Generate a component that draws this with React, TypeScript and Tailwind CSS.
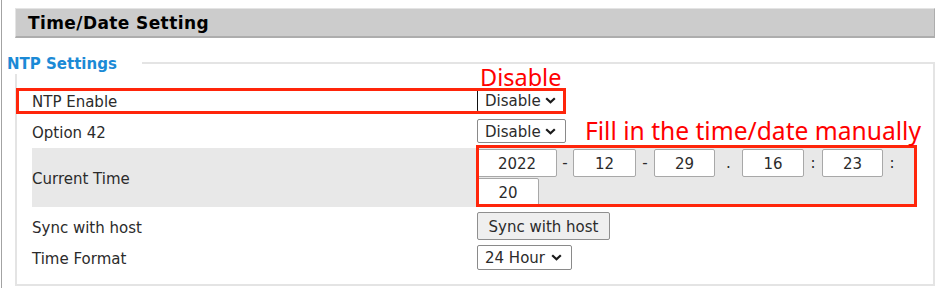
import { ReactNode } from "react";

function Chevron() {
  return (
    <svg width="11" height="7" viewBox="0 0 11 7" className="shrink-0">
      <path d="M1.2 1.2 L5.5 5.3 L9.8 1.2" fill="none" stroke="#1a1a1a" strokeWidth="2.2" />
    </svg>
  );
}

function FakeSelect({ value, width, dark }: { value: string; width: string; dark?: boolean }) {
  return (
    <div
      className={`flex h-[24px] items-center justify-between rounded-[2px] border bg-white pl-[7px] pr-[9px] ${width} ${
        dark ? "border-[#8a8a8a] border-l-[#111]" : "border-[#8a8a8a]"
      }`}
    >
      <span className="pt-[2px] leading-none">{value}</span>
      <Chevron />
    </div>
  );
}

function Field({ value, width }: { value: string; width: string }) {
  return (
    <div
      className={`flex h-[28px] items-center justify-center rounded-[2px] border border-[#a8a8a8] bg-white pt-[2px] leading-none ${width}`}
    >
      {value}
    </div>
  );
}

function Sep({ ch, width }: { ch: string; width: string }) {
  return <span className={`text-center leading-none ${width}`}>{ch}</span>;
}

function Row({ label, className, children }: { label: string; className: string; children: ReactNode }) {
  return (
    <div className={`flex items-center ${className}`}>
      <div className="w-[445px] shrink-0 pt-[4px]">{label}</div>
      <div>{children}</div>
    </div>
  );
}

export default function App() {
  return (
    <div className="h-[288px] w-[937px] overflow-hidden bg-white font-['DejaVu_Sans',sans-serif] text-[15px] text-[#2b2b2b]">
      <div className="ml-px h-full border-l border-[#a3a3a3] pl-[13px] pt-[8px]">
        <div className="flex h-[30px] w-[920px] items-center border border-[#e4e4e4] border-r-[#adadad] border-b-2 border-b-[#adadad] bg-[#cccccc] pl-[12px]">
          <h1 className="pt-[1px] text-[17px] font-bold leading-none tracking-[0.4px] text-black">Time/Date Setting</h1>
        </div>

        <div className="relative mt-[24px] h-[224px] w-[920px] border-2 border-[#e4e4e4] pl-[15px] pt-[22px]">
          <div className="absolute left-[-10px] top-[-9px] h-[19px] w-[135px] bg-white text-[15px] font-bold leading-[19px] text-[#1b8ad6]">
            NTP Settings
          </div>

          <div className="w-[885px]">
            <Row label="NTP Enable" className="h-[28px]">
              <FakeSelect value="Disable" width="w-[89px]" dark />
            </Row>
            <Row label="Option 42" className="mt-[3px] h-[28px]">
              <FakeSelect value="Disable" width="w-[89px]" />
            </Row>
            <Row label="Current Time" className="mt-[3px] h-[59px] bg-[#e8e8e8]">
              <div className="flex flex-col gap-[1px]">
                <div className="flex items-center">
                  <Field value="2022" width="w-[80px]" />
                  <Sep ch="-" width="w-[16px]" />
                  <Field value="12" width="w-[63px]" />
                  <Sep ch="-" width="w-[18px]" />
                  <Field value="29" width="w-[61px]" />
                  <Sep ch="." width="w-[27px]" />
                  <Field value="16" width="w-[62px]" />
                  <Sep ch=":" width="w-[18px]" />
                  <Field value="23" width="w-[61px]" />
                  <Sep ch=":" width="w-[18px]" />
                </div>
                <Field value="20" width="w-[62px]" />
              </div>
            </Row>
            <Row label="Sync with host" className="mt-[3px] h-[32px]">
              <button className="h-[28px] w-[133px] rounded-[2px] border border-[#8f8f8f] bg-[#efefef] pt-[2px] leading-none">
                Sync with host
              </button>
            </Row>
            <Row label="Time Format" className="mt-[1px] h-[29px]">
              <FakeSelect value="24 Hour" width="h-[25px] w-[95px]" />
            </Row>
          </div>

          <div className="absolute left-[-1px] top-[24px] h-[26px] w-[550px] border-[3px] border-[#ff250a]" />
          <div className="absolute left-[459px] top-[81px] h-[62px] w-[441px] border-[3px] border-[#ff250a]" />
          <div className="absolute left-[463px] top-[2px] font-['Noto_Sans',sans-serif] text-[23.5px] leading-none text-[#ff0000]">
            Disable
          </div>
          <div className="absolute left-[568px] top-[55px] font-['Noto_Sans',sans-serif] text-[24.6px] leading-none text-[#ff0000]">
            Fill in the time/date manually
          </div>
        </div>
      </div>
    </div>
  );
}
